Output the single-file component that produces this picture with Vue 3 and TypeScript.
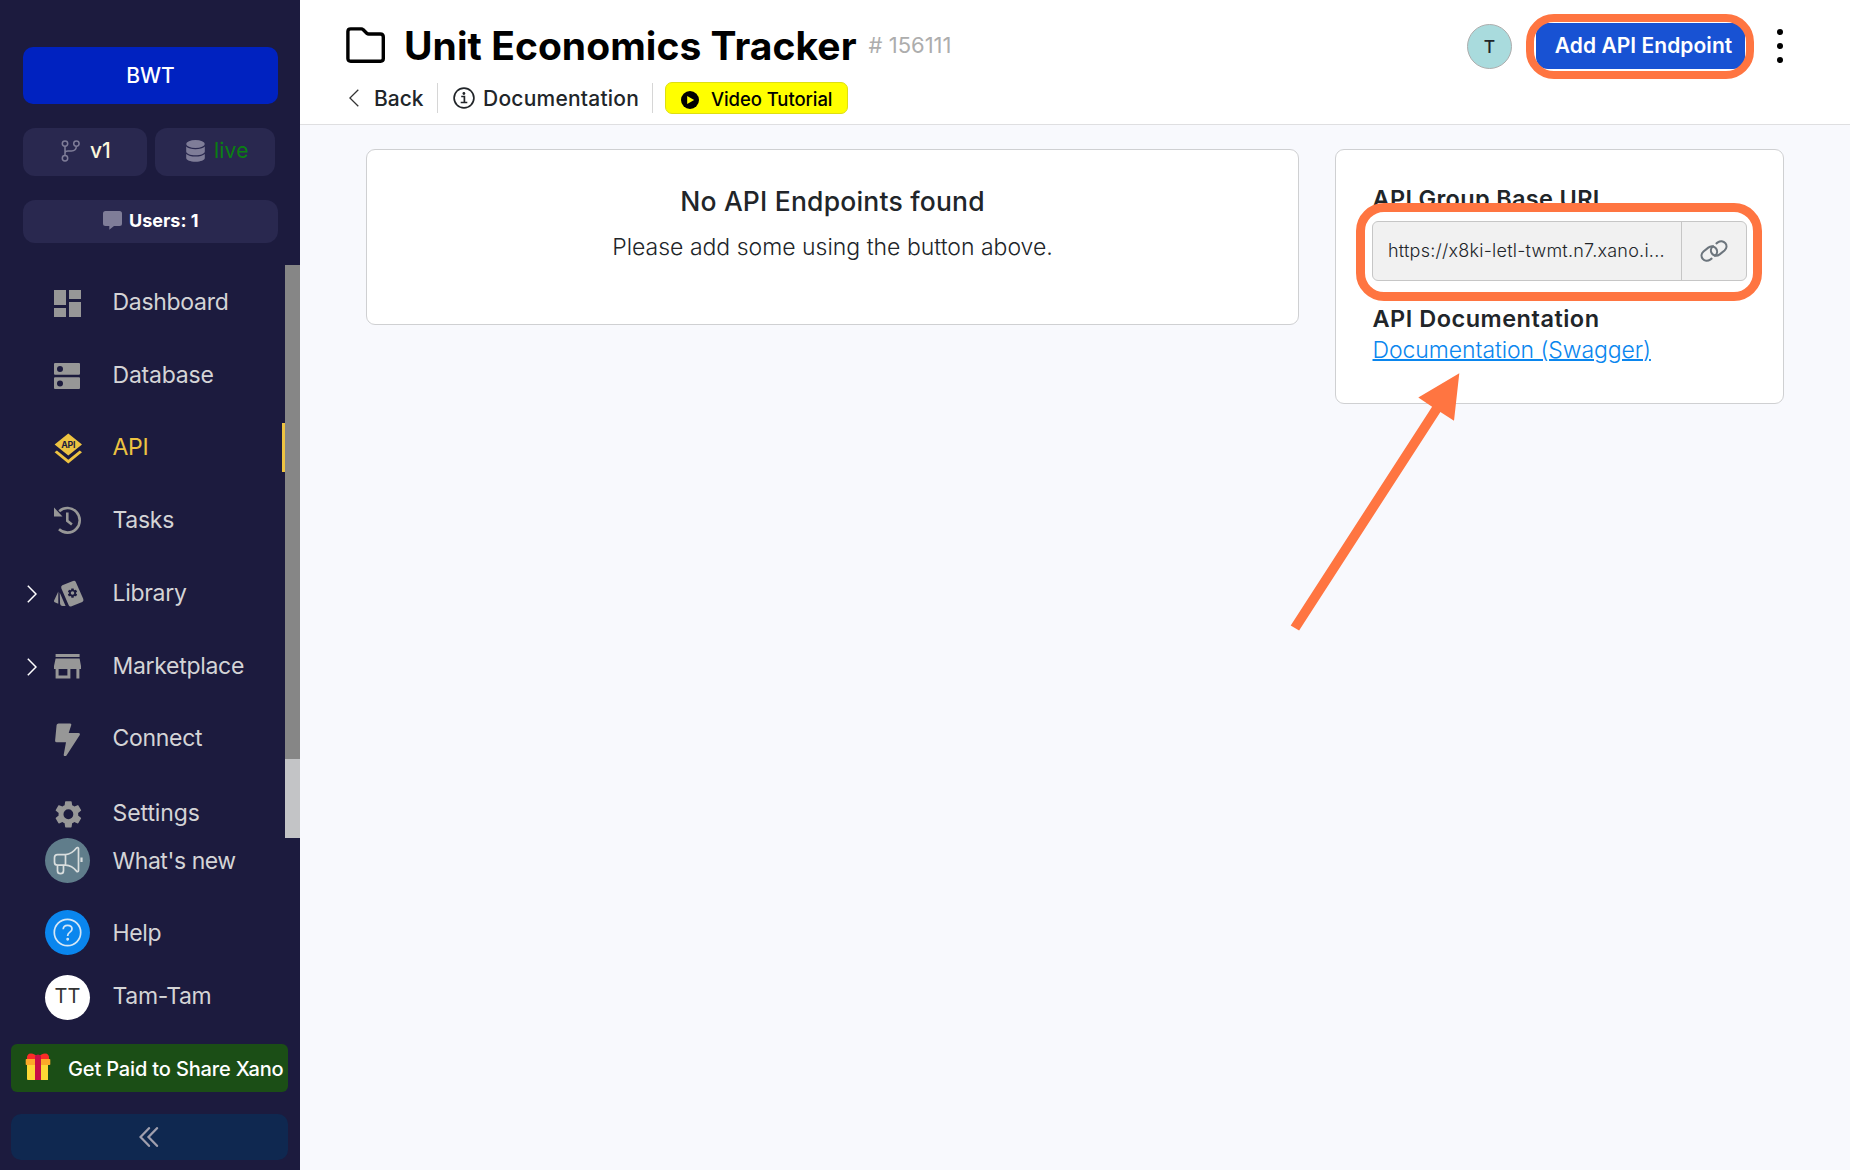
<script setup lang="ts">
interface NavItem {
  label: string
  icon: string
  active?: boolean
  expandable?: boolean
}

const navItems: NavItem[] = [
  { label: 'Dashboard', icon: 'dashboard' },
  { label: 'Database', icon: 'database' },
  { label: 'API', icon: 'api', active: true },
  { label: 'Tasks', icon: 'tasks' },
  { label: 'Library', icon: 'library', expandable: true },
  { label: 'Marketplace', icon: 'market', expandable: true },
  { label: 'Connect', icon: 'connect' },
  { label: 'Settings', icon: 'settings' },
]

const gearPath =
  'M19.140 12.940c.04-.3.060-.61.060-.94 0-.32-.02-.64-.07-.94l2.030-1.580a.49.49 0 0 0 .12-.61l-1.920-3.320a.488.488 0 0 0-.59-.22l-2.390.96c-.5-.38-1.030-.7-1.620-.94l-.36-2.540a.484.484 0 0 0-.48-.41h-3.840c-.24 0-.43.170-.47.410l-.36 2.540c-.59.240-1.130.570-1.620.940l-2.390-.96c-.22-.08-.47 0-.59.220L2.740 8.870c-.12.210-.08.470.12.610l2.030 1.580c-.05.3-.09.630-.09.940s.02.640.07.940l-2.030 1.580a.49.49 0 0 0-.12.610l1.920 3.320c.12.220.37.290.59.220l2.390-.96c.5.380 1.030.7 1.620.94l.36 2.540c.05.24.24.41.48.41h3.840c.24 0 .44-.17.47-.41l.36-2.540c.59-.24 1.130-.56 1.620-.94l2.390.96c.22.08.47 0 .59-.22l1.920-3.320c.12-.22.070-.47-.12-.61zM12 15.600A3.600 3.600 0 1 1 12 8.400a3.600 3.600 0 0 1 0 7.200z'

const groupId = 156111
</script>

<template>
  <div class="app">
    <aside class="sidebar">
      <button class="workspace">BWT</button>
      <div class="env-row">
        <button class="chip branch">
          <svg width="19" height="22" viewBox="0 0 19 22" fill="none" stroke="#7f7d98" stroke-width="1.5">
            <circle cx="4" cy="3.6" r="2.7" /><circle cx="15.4" cy="3.6" r="2.7" /><circle cx="4" cy="18.2" r="2.7" />
            <path d="M4 6.3v9.2M4 13c0-1.600 1-2 3-2h3.500c3 0 4.700-1.500 4.900-4.700" />
          </svg>
          <span>v1</span>
        </button>
        <button class="chip live">
          <svg width="19" height="22" viewBox="0 0 19 22" fill="#7f7d98">
            <ellipse cx="9.500" cy="4" rx="9.300" ry="4" />
            <path d="M.2 6.600C2 8.400 5.500 9.200 9.500 9.200s7.500-.8 9.300-2.600v4.800c0 2-4 3.800-9.300 3.800S.2 13.400.2 11.400z" />
            <path d="M.2 14C2 15.600 5.500 16.600 9.500 16.600s7.500-1 9.300-2.600v4c0 2-4 3.800-9.300 3.800S.2 20 .2 18z" />
          </svg>
          <span>live</span>
        </button>
      </div>
      <button class="chip users">
        <svg width="19" height="19" viewBox="0 0 19 19" fill="#7f7d98">
          <path d="M2.500 0h14A2.500 2.500 0 0 1 19 2.500v10a2.500 2.500 0 0 1-2.500 2.500H11l-4.700 3.700V15H2.500A2.500 2.500 0 0 1 0 12.500v-10A2.500 2.500 0 0 1 2.500 0z" />
        </svg>
        <span>Users: 1</span>
      </button>

      <div class="nav-wrap">
        <nav class="nav">
          <a v-for="item in navItems" :key="item.label" class="nav-item" :class="[item.icon, { active: item.active }]">
            <svg v-if="item.expandable" class="chev" width="10" height="18" viewBox="0 0 10 18" fill="none" stroke="#fff" stroke-width="1.500">
              <path d="M.8.8 9 9 .8 17.200" />
            </svg>
            <span v-else class="chev"></span>
            <svg class="icon" width="32" height="34" viewBox="0 0 32 34" fill="#979797">
              <template v-if="item.icon === 'dashboard'">
                <path d="M0 5h12v15H0zM15 5h12v9H15zM0 23h12v9H0zM15 17h12v15H15z" />
              </template>
              <template v-else-if="item.icon === 'database'">
                <path fill-rule="evenodd" d="M1 5h24a1 1 0 0 1 1 1v9.700a1 1 0 0 1-1 1H1a1 1 0 0 1-1-1V6a1 1 0 0 1 1-1zM6 8a3 3 0 1 0 0 6 3 3 0 0 0 0-6zM1 19.300h24a1 1 0 0 1 1 1V30a1 1 0 0 1-1 1H1a1 1 0 0 1-1-1v-9.700a1 1 0 0 1 1-1zM6 22.500a3 3 0 1 0 0 6 3 3 0 0 0 0-6z" />
              </template>
              <template v-else-if="item.icon === 'api'">
                <path fill="#edc341" d="M14.300 3.500 28 14.500l-13.700 11L.6 14.500zM.6 22.300l2.300-1.800 11.400 9.200 11.400-9.200 2.300 1.800-13.700 11.100z" />
                <text x="14.200" y="17.800" text-anchor="middle" fill="#1c1b3e" font-size="8.800" font-weight="700">API</text>
              </template>
              <template v-else-if="item.icon === 'tasks'">
                <path fill="none" stroke="#979797" stroke-width="2.600" d="M5.200 8.200A12.300 12.300 0 1 1 5 26.300" />
                <path d="M0 4.500v9h8.500z" />
                <path fill="none" stroke="#979797" stroke-width="2.600" d="M13.300 9.500v8.300l4.600 3.600" />
              </template>
              <template v-else-if="item.icon === 'library'">
                <path d="M8.300 9.300 19 5q2-.7 2.800 1l7.500 17q.7 2-1 2.900l-10.700 4.300q-2 .7-2.900-1L7.300 12.200q-.7-2 1-2.900z" />
                <path d="M5.700 16.500 11.600 30H8.500q-2 0-2.400-2zM4.300 15.500v12.200l-3.600-1.400q-1-.6-.6-1.900z" />
                <g transform="translate(12.620 11.220) scale(.49)" fill="#1c1b3e">
                  <path :d="gearPath" />
                </g>
              </template>
              <template v-else-if="item.icon === 'market'">
                <path fill-rule="evenodd" d="M1.600 5h24v3h-24zM1.600 9.500h24L27 17v3h-1.600v9.600h-3V20h-6v9.600H1.600V20H0v-3zM4.600 20v6.500h8.800V20z" />
              </template>
              <template v-else-if="item.icon === 'connect'">
                <path d="M4.500 1.500h11.300q2 0 1.400 1.700L14.700 11h9.700q2.200.2 1.200 2.200L12.500 33.500q-2.500 2.200-2.800-.8L12 20.300H2.700q-1.700-.1-1.600-1.800L2.600 3.100q.3-1.600 1.900-1.600z" />
              </template>
              <template v-else>
                <g transform="translate(-2 1.900) scale(1.365)">
                  <path :d="gearPath" />
                </g>
              </template>
            </svg>
            <span class="label">{{ item.label }}</span>
          </a>
        </nav>
        <div class="scrollbar"><div class="thumb"></div></div>
      </div>

      <a class="foot-item news">
        <span class="disc grey">
          <svg width="30" height="30" viewBox="0 0 30 30" fill="none" stroke="#d9dede" stroke-width="1.700" stroke-linejoin="round">
            <path d="M12.500 8.700H4.500a3 3 0 0 0-3 3v4.500a3 3 0 0 0 3 3h8zM12.500 8.700c5-.5 9-4 11-6.600.8-1 2-.6 2 .5v22c0 1.200-1.200 1.500-2 .5-2-2.600-6-5.800-11-6M4.500 19.200v5.500a3 3 0 0 0 6 0v-5.500" />
            <path stroke-width="2.200" d="M28.500 11.500v4.500" />
          </svg>
        </span>
        <span>What's new</span>
      </a>
      <a class="foot-item help">
        <span class="disc blue">
          <svg width="30" height="30" viewBox="0 0 30 30" fill="none" stroke="#d5e7f6" stroke-width="1.700">
            <circle cx="14.500" cy="14.500" r="13.200" />
            <path d="M10.200 11.200c.1-2.500 1.900-3.900 4.400-3.900 2.600 0 4.400 1.500 4.400 3.700 0 3.200-4.300 3-4.300 6.500v.4" />
            <circle cx="14.700" cy="21.200" r=".6" fill="#d5e7f6" />
          </svg>
        </span>
        <span>Help</span>
      </a>
      <a class="foot-item user">
        <span class="disc white">TT</span>
        <span>Tam-Tam</span>
      </a>

      <button class="share">
        <svg width="26" height="28" viewBox="0 0 26 28">
          <path fill="#fb2d27" d="M2 6q-.5-5.500 4-5.500 3.500 0 7 4 3.500-4 7-4 4.500 0 4 5.500z" />
          <path fill="#fdd835" d="M2 11h21v16H3q-1 0-1-1z" />
          <path fill="#fda929" d="M1.500 6h23q.8 0 .8.800v4.400q0 .8-.8.800h-23q-.8 0-.8-.8V6.800q0-.8.800-.8z" />
          <path fill="#c80f47" d="M10 3q3-3 6 0v24h-6z" />
        </svg>
        <span>Get Paid to Share Xano</span>
      </button>
      <button class="collapse">
        <svg width="20" height="20" viewBox="0 0 20 20" fill="none" stroke="#a09fae" stroke-width="2.300" stroke-linecap="round">
          <path d="M10 1.200 1.500 10l8.500 8.800M18 1.200 9.500 10l8.500 8.800" />
        </svg>
      </button>
    </aside>

    <main class="main">
      <header class="header">
        <div class="heading">
          <div class="title-row">
            <svg class="folder" width="39" height="36" viewBox="0 0 39 36" fill="none" stroke="#000" stroke-width="3.400" stroke-linejoin="round">
              <path d="M4.700 1.900h10.600q1 0 1.700.700l4 3.800q.7.600 1.700.6h11.600q3 0 3 3v21.500q0 2.700-2.700 2.700H4.700Q1.900 34.200 1.900 31.500V4.600q0-2.700 2.800-2.700z" />
            </svg>
            <h1>Unit Economics Tracker</h1>
            <span class="gid"># {{ groupId }}</span>
          </div>
          <div class="links">
            <a class="back">
              <svg width="10" height="18" viewBox="0 0 10 18" fill="none" stroke="#333" stroke-width="1.300"><path d="M9.300.7.9 9l8.400 8.300" /></svg>
              <span>Back</span>
            </a>
            <a class="doc">
              <svg width="22" height="22" viewBox="0 0 22 22" fill="none" stroke="#212529" stroke-width="1.700">
                <circle cx="11" cy="11" r="9.900" />
                <path d="M8.200 9.500h3.200v6M7.700 15.500h6.600" />
                <circle cx="10.900" cy="6.500" r="1.400" fill="#212529" stroke="none" />
              </svg>
              <span>Documentation</span>
            </a>
            <a class="video">
              <svg width="18" height="18" viewBox="0 0 18 18"><circle cx="9" cy="9" r="9" /><path fill="#ff0" d="M6.200 5v8l7-4z" /></svg>
              <span>Video Tutorial</span>
            </a>
          </div>
        </div>
        <div class="actions">
          <span class="avatar">T</span>
          <div class="add-wrap">
            <button class="add">Add API Endpoint</button>
            <div class="mark-add"></div>
          </div>
          <svg class="kebab" width="6" height="34" viewBox="0 0 6 34"><circle cx="3" cy="3" r="3" /><circle cx="3" cy="17" r="3" /><circle cx="3" cy="31" r="3" /></svg>
        </div>
      </header>

      <div class="content">
        <section class="card empty">
          <h2>No API Endpoints found</h2>
          <p>Please add some using the button above.</p>
        </section>
        <section class="card info">
          <h3 class="base">API Group Base URL</h3>
          <div class="url-box">
            <span class="url">https://x8ki-letl-twmt.n7.xano.i...</span>
            <button class="copy">
              <svg width="28" height="22" viewBox="0 0 28 22" fill="none" stroke="#6c757d" stroke-width="2.100" stroke-linecap="round">
                <path d="M11.500 18.700 10.200 19.700C7.600 21.400 4.500 21 2.700 18.800 .9 16.500 1.200 13.500 3.500 11.500L8.300 7.700C11 5.700 14.300 6.100 16 8.400 17.800 10.800 17.200 14 15 15.800" />
                <path d="M16.500 3.300 17.800 2.300C20.400 .6 23.500 1 25.300 3.200 27.100 5.500 26.800 8.500 24.500 10.500L19.700 14.300C17 16.300 13.700 15.900 12 13.600 10.200 11.200 10.800 8 13 6.200" />
              </svg>
            </button>
            <div class="mark-url"></div>
          </div>
          <h3>API Documentation</h3>
          <a class="swagger">Documentation (Swagger)</a>
        </section>
      </div>
    </main>

    <svg class="arrow" width="172" height="260" viewBox="0 0 172 260" fill="#ff7541">
      <path d="M169.300 3.300 128.300 27.500l13.800 9.200L.7 255.500l8.400 5 141.300-218.600L164 50.700z" />
    </svg>
  </div>
</template>

<style>
html,
body {
  margin: 0;
  overflow: hidden;
}
</style>

<style scoped>
.app {
  position: relative;
  display: flex;
  width: 1850px;
  height: 1170px;
  overflow: hidden;
  background: #f8f9fd;
  color: #212529;
  font-family: Inter, "Liberation Sans", sans-serif;
}
.app * {
  box-sizing: border-box;
}
button {
  border: 0;
  padding: 0;
  font-family: inherit;
  color: inherit;
}
h1,
h2,
h3,
p {
  margin: 0;
}
svg {
  display: block;
  flex: none;
}
span {
  white-space: nowrap;
}

.sidebar {
  display: flex;
  flex-direction: column;
  flex: none;
  width: 300px;
  height: 1170px;
  background: #1c1b3e;
  color: #d4d4d6;
}
.workspace {
  flex: none;
  width: 255px;
  height: 57px;
  margin: 47px 0 0 23px;
  border-radius: 10px;
  background: #0022c0;
  color: #fff;
  font-size: 21px;
  font-weight: 500;
}
.env-row {
  display: flex;
  gap: 8px;
  margin: 24px 0 0 23px;
}
.chip {
  display: flex;
  align-items: center;
  border-radius: 12px;
  background: #29284f;
}
.chip.branch {
  width: 124px;
  height: 48px;
  padding: 0 0 3px 38px;
  gap: 10px;
  color: #fcf6dc;
  font-size: 21px;
  font-weight: 500;
}
.chip.live {
  width: 120px;
  height: 48px;
  padding: 0 0 3px 31px;
  gap: 9px;
  color: #0b8012;
  font-size: 21px;
  letter-spacing: 0.2px;
}
.chip.users {
  flex: none;
  width: 255px;
  height: 43px;
  margin: 24px 0 0 23px;
  padding: 0 0 2px 80px;
  gap: 7px;
  color: #fff;
  font-size: 18px;
  font-weight: 700;
}

.nav-wrap {
  display: flex;
  flex: none;
  height: 573px;
  margin-top: 22px;
}
.nav {
  width: 285px;
  overflow: hidden;
}
.nav-item {
  display: flex;
  align-items: center;
  height: 72.700px;
  padding: 2px 0 0 27px;
  font-size: 23px;
  letter-spacing: -0.300px;
}
.nav-item .chev {
  width: 10px;
  margin-right: 17px;
}
svg.chev {
  position: relative;
  top: 1px;
}
.nav-item .icon {
  margin-right: 26.500px;
}
.nav-item.active {
  position: relative;
  padding-top: 1px;
  color: #edc341;
}
.nav-item.active::after {
  content: "";
  position: absolute;
  right: 0;
  top: 12.600px;
  width: 3px;
  height: 49px;
  background: #edc341;
}
.nav-item.settings {
  padding-top: 6px;
  letter-spacing: -0.080px;
}
.nav-item.database {
  letter-spacing: -0.200px;
}
.nav-item.connect .icon {
  margin-top: 2px;
}
.scrollbar {
  width: 15px;
  background: #c3c4c6;
}
.thumb {
  height: 494px;
  background: #868686;
}

.foot-item {
  display: flex;
  flex: none;
  align-items: center;
  gap: 22.500px;
  height: 45px;
  padding-left: 45px;
  font-size: 23px;
  letter-spacing: -0.350px;
}
.foot-item.news {
  letter-spacing: -0.440px;
}
.disc {
  display: flex;
  align-items: center;
  justify-content: center;
  width: 45px;
  height: 45px;
  border-radius: 50%;
}
.disc.grey {
  background: #607d8b;
}
.disc.blue {
  background: #0a86ee;
}
.disc.white {
  background: #fff;
  color: #333;
  font-size: 20px;
  letter-spacing: 0;
  padding-bottom: 4px;
}
.help {
  margin-top: 27px;
}
.user {
  margin-top: 20px;
}
.user span:last-child {
  margin-top: -4px;
}
.share {
  display: flex;
  flex: none;
  align-items: center;
  width: 277px;
  height: 48px;
  margin: 24px 0 0 11px;
  padding: 0 0 2px 14px;
  gap: 17px;
  border-radius: 6px;
  background: #1b4e16;
  color: #fff;
  font-size: 20px;
  font-weight: 500;
  letter-spacing: -0.150px;
}
.share span {
  padding-top: 4px;
}
.collapse {
  display: flex;
  flex: none;
  align-items: center;
  justify-content: center;
  width: 277px;
  height: 46px;
  margin: 22px 0 0 11px;
  padding: 0 1px 1px 0;
  border-radius: 10px;
  background: #0f2850;
}

.main {
  flex: 1;
  display: flex;
  flex-direction: column;
}
.header {
  display: flex;
  justify-content: space-between;
  height: 125px;
  border-bottom: 1px solid #dfdfe1;
  background: #fff;
}
.heading {
  padding-left: 46px;
}
.title-row {
  display: flex;
  height: 82px;
}
.folder {
  margin-top: 27px;
}
h1 {
  margin: 22px 0 0 19px;
  font-size: 39px;
  line-height: 48px;
  font-weight: 700;
  letter-spacing: 0.050px;
  color: #000;
  white-space: nowrap;
}
.gid {
  margin: 32px 0 0 12px;
  font-size: 22px;
  line-height: 27px;
  color: #adadad;
}
.links {
  display: flex;
  height: 31px;
  font-size: 21px;
  font-weight: 500;
}
.links a {
  display: flex;
  align-items: center;
}
.back {
  width: 92px;
  margin-top: 1px;
  padding-left: 3px;
  gap: 15px;
  border-right: 1px solid #d6d6d6;
}
.doc {
  width: 215px;
  margin-top: 1px;
  padding-left: 15px;
  gap: 8px;
  border-right: 1px solid #d6d6d6;
  letter-spacing: 0.230px;
}
.video {
  width: 183px;
  height: 32px;
  margin-left: 12px;
  padding: 3px 0 0 15px;
  gap: 12px;
  border: 1px solid #dede12;
  border-radius: 7px;
  background: #ff0;
  color: #000;
  font-size: 18.500px;
  letter-spacing: -0.080px;
}
.video span {
  margin-top: -1.500px;
}
.actions {
  display: flex;
  padding-right: 67px;
}
.avatar {
  width: 45px;
  height: 45px;
  margin-top: 24px;
  border: 1px solid #adadad;
  border-radius: 50%;
  background: #a9dbdd;
  font-size: 17.500px;
  font-weight: 500;
  line-height: 44px;
  text-align: center;
}
.add-wrap {
  position: relative;
  margin: 23px 0 0 24px;
}
.add {
  display: block;
  width: 209px;
  height: 46px;
  border-radius: 12px;
  background: #1852d3;
  color: #fff;
  font-size: 21px;
  font-weight: 600;
  letter-spacing: 0.050px;
  padding: 0 0 2px 6px;
  white-space: nowrap;
}
.mark-add {
  position: absolute;
  left: -10px;
  top: -9px;
  width: 228px;
  height: 64.500px;
  border: 8px solid #ff7541;
  border-radius: 28px;
}
.kebab {
  margin: 29.400px 0 0 32px;
}

.content {
  display: flex;
  align-items: flex-start;
  gap: 36px;
  padding: 24px 0 0 66px;
}
.card {
  border: 1px solid #cfd0d2;
  border-radius: 9px;
  background: #fff;
}
.empty {
  width: 933px;
  height: 176px;
  padding-top: 35px;
  text-align: center;
}
h2 {
  font-size: 26.500px;
  line-height: 32px;
  font-weight: 450;
  letter-spacing: 0.200px;
}
.empty p {
  margin-top: 16px;
  font-size: 23px;
  line-height: 28px;
  font-weight: 300;
}
.info {
  width: 449px;
  height: 255px;
  padding: 36px 0 0 36.500px;
}
h3 {
  font-size: 23.500px;
  line-height: 28px;
  font-weight: 640;
  letter-spacing: 0.500px;
}
h3.base {
  margin-top: -1px;
  letter-spacing: 0.330px;
}
.url-box {
  position: relative;
  display: flex;
  width: 375px;
  height: 60px;
  margin: 8px 0 24px -0.500px;
  border: 1px solid #c6c6c6;
  border-radius: 6px;
  background: #f1f1f1;
}
.url {
  width: 309px;
  padding-left: 15px;
  border-right: 1px solid #c6c6c6;
  font-size: 18px;
  line-height: 58px;
  font-weight: 360;
  letter-spacing: 0.230px;
}
.copy {
  display: flex;
  flex: 1;
  align-items: center;
  justify-content: center;
  background: none;
}
.mark-url {
  position: absolute;
  left: -17px;
  top: -19px;
  width: 406px;
  height: 98.300px;
  border: 9.500px solid #ff7541;
  border-radius: 28px;
}
.swagger {
  display: block;
  margin-top: 3px;
  font-size: 23px;
  line-height: 28px;
  font-weight: 300;
  letter-spacing: -0.080px;
  color: #0a86ee;
  text-decoration: underline;
  text-decoration-thickness: 2px;
}
.arrow {
  position: absolute;
  left: 1290px;
  top: 370px;
  overflow: visible;
}
</style>
